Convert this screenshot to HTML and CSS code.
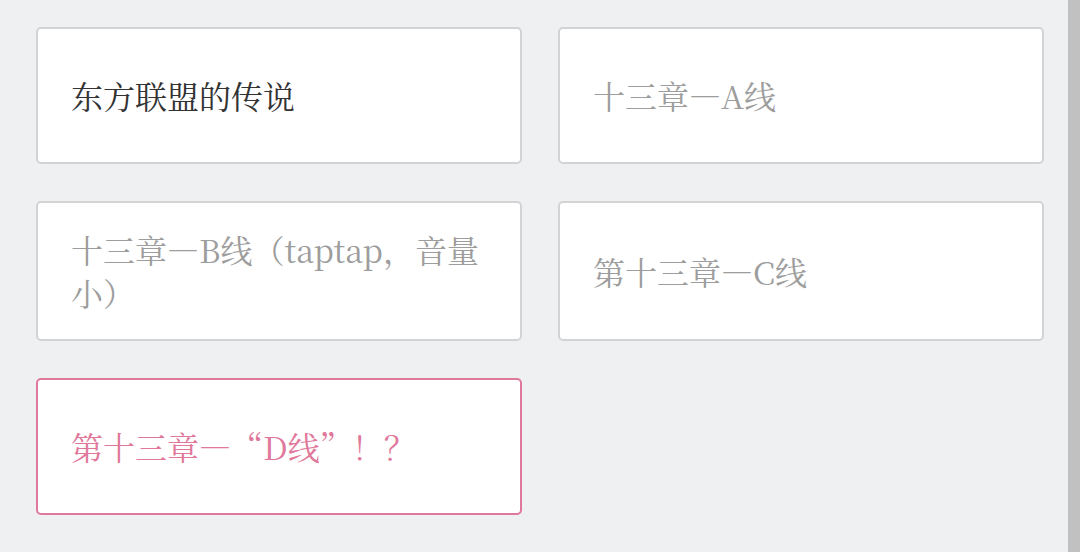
FILE: index.html
```html
<!DOCTYPE html>
<html lang="zh-CN">

<head>
    <meta charset="UTF-8">
    <meta name="viewport" content="width=device-width, initial-scale=1.0">
    <title>选择线路</title>
    <link rel="stylesheet" href="styles.css">
</head>

<body>

    <div class="page">
        <div class="content">
            <div class="chapter-grid">
                <div class="chapter chapter-main">东方联盟的传说</div>
                <div class="chapter">十三章—A线</div>
                <div class="chapter">十三章—B线（taptap，音量小）</div>
                <div class="chapter">第十三章—C线</div>
                <div class="chapter chapter-active">第十三章—“D线”！？</div>
            </div>
        </div>
        <!-- barra lateral de desplazamiento -->
        <div class="scrollbar"></div>
    </div>

</body>

</html>
```

FILE: styles.css
```css
html,
body {
    margin: 0;
    height: 100%;
    overflow: hidden;
}

body {
    font-family: "Noto Serif CJK SC", "Liberation Serif", "Noto Sans CJK SC", serif;
    background-color: #eff0f2;
}

.page {
    display: flex;
    height: 552px;
}

.content {
    flex: 1;
    padding: 27px 0 0 36px;
}

.scrollbar {
    width: 12px;
    background-color: #c1c1c1;
}

.chapter-grid {
    display: grid;
    grid-template-columns: 486px 486px;
    column-gap: 36px;
    row-gap: 37px;
}

.chapter {
    box-sizing: border-box;
    min-height: 137px;
    display: flex;
    align-items: center;
    padding: 25px 33px;
    background-color: #fff;
    border: 2px solid #d2d3d5;
    border-radius: 5px;
    font-size: 32px;
    line-height: 43px;
    color: #9d9d9d;
}

.chapter-main {
    color: #333;
}

.chapter-active {
    border-color: #e0789c;
    color: #e0789c;
}
```
